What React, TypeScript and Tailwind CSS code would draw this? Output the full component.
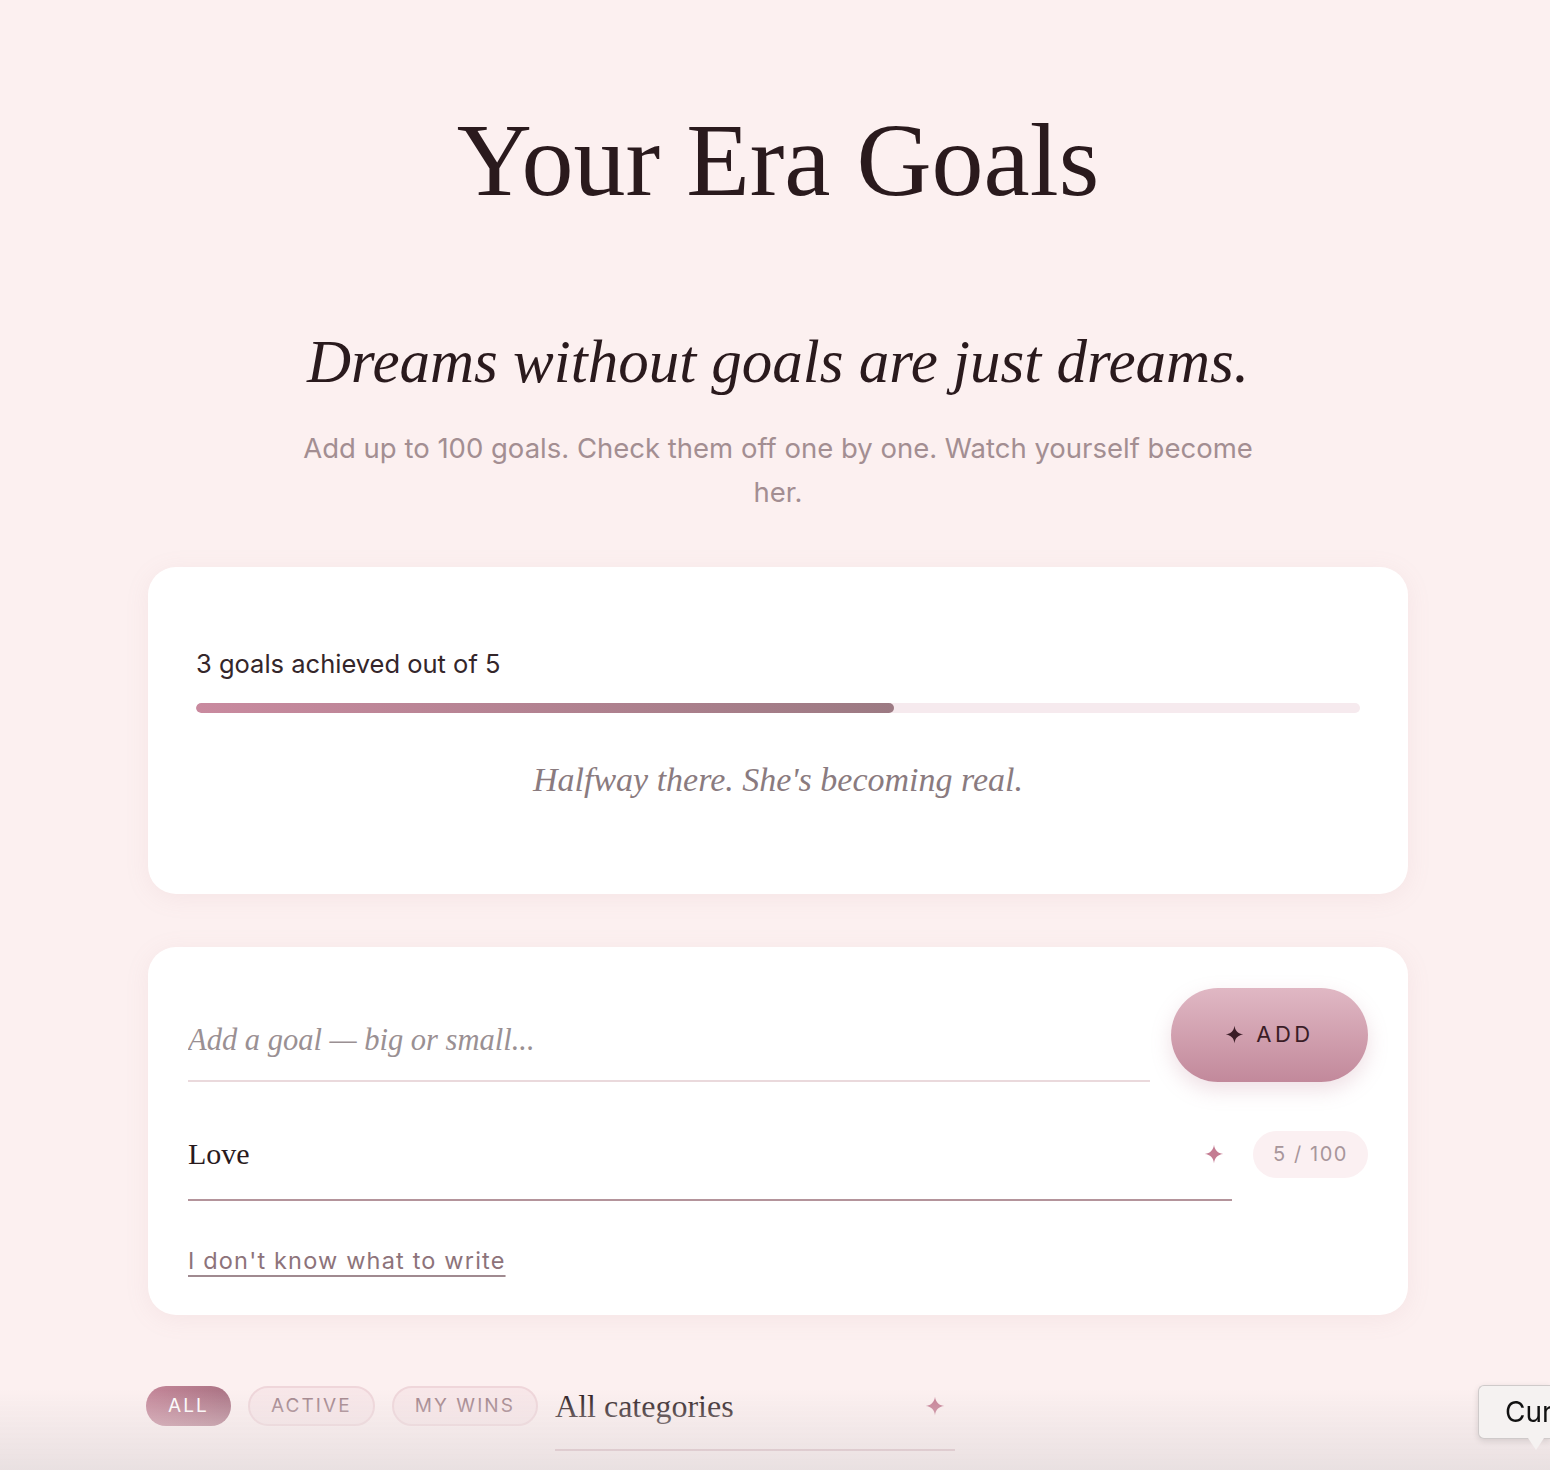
import React, { useState } from 'react';

const serif = "font-['Liberation_Serif',serif]";
const sans = "font-['Inter',sans-serif]";

const Sparkle: React.FC<{ className?: string }> = ({ className }) => (
  <svg viewBox="0 0 24 24" className={className} fill="currentColor">
    <path d="M12 1 C12.8 7.5 16.5 11.2 23 12 C16.5 12.8 12.8 16.5 12 23 C11.2 16.5 7.5 12.8 1 12 C7.5 11.2 11.2 7.5 12 1 Z" />
  </svg>
);

const App: React.FC = () => {
  const [filter, setFilter] = useState<'all' | 'active' | 'wins'>('all');
  const achieved = 3;
  const total = 5;
  const pct = (achieved / total) * 100;

  const pill = (key: 'all' | 'active' | 'wins', label: string) => (
    <button
      onClick={() => setFilter(key)}
      className={
        filter === key
          ? `${sans} h-[40px] px-[22px] rounded-full text-[19px] tracking-[0.11em] text-white bg-gradient-to-r from-[#c48799] to-[#ab7485]`
          : `${sans} h-[40px] px-[21px] rounded-full text-[19px] tracking-[0.11em] text-[#a08289] bg-[#f8e7e9] border-2 border-[#efd6da]`
      }
    >
      {label}
    </button>
  );

  return (
    <div className="min-h-screen bg-[#fcf0f0] pb-[40px]">
      <div className="w-[1260px] ml-[148px]">
        <h1 className={`${serif} text-center text-[104px] leading-none text-[#2a1a1d] pt-[108px]`}>
          Your Era Goals
        </h1>

        <p className={`${serif} italic text-center text-[61px] leading-none text-[#2a1a1d] mt-[119px]`}>
          Dreams without goals are just dreams.
        </p>
        <p className={`${sans} text-center text-[27.5px] leading-[44px] text-[#a38e92] max-w-[980px] mx-auto mt-[34px]`}>
          Add up to 100 goals. Check them off one by one. Watch yourself become her.
        </p>

        {/* progress card */}
        <div className="mt-[53px] bg-white rounded-[28px] shadow-[0_4px_24px_rgba(190,140,150,0.10)] px-12 pt-[84px] pb-[97px]">
          <div className={`${sans} text-[25.5px] leading-none text-[#34262a]`}>
            {achieved} goals achieved out of {total}
          </div>
          <div className="mt-[26px] h-[10px] rounded-full bg-[#f6eaee] overflow-hidden">
            <div
              className="h-full rounded-full bg-gradient-to-r from-[#c98a9f] to-[#9c7a83]"
              style={{ width: `${pct}%` }}
            />
          </div>
          <p className={`${serif} italic text-center text-[34px] leading-none text-[#8a7b7f] mt-[50px]`}>
            Halfway there. She's becoming real.
          </p>
        </div>

        {/* add goal card */}
        <div className="mt-[53px] bg-white rounded-[28px] shadow-[0_4px_24px_rgba(190,140,150,0.10)] px-10 pt-[41px] pb-[43px]">
          <div className="flex items-end gap-[21px]">
            <div className="flex-1 border-b-2 border-[#ead9dc] pb-[22px]">
              <input
                placeholder="Add a goal — big or small..."
                className={`${serif} italic w-full text-[30.5px] leading-none text-[#2a1a1d] placeholder:text-[#9a9093] outline-none bg-transparent`}
              />
            </div>
            <button
              className={`${sans} w-[197px] h-[94px] rounded-full bg-gradient-to-b from-[#e0b8c4] to-[#c2899b] shadow-[0_8px_20px_rgba(190,130,150,0.25)] flex items-center justify-center gap-[12px] text-[22px] tracking-[0.16em] text-[#3a1c26]`}
            >
              <Sparkle className="w-[19px] h-[19px]" />
              ADD
            </button>
          </div>

          <div className="flex items-start gap-[21px] mt-[40px]">
            <div className="flex-1 flex items-center border-b-2 border-[#b4949b] pt-[17px] pb-[30px]">
              <span className={`${serif} flex-1 text-[30px] leading-none text-[#2a1a1d]`}>Love</span>
              <Sparkle className="w-[20px] h-[20px] text-[#c47c92] mr-[8px]" />
            </div>
            <div className={`${sans} mt-[9px] w-[115px] h-[47px] rounded-full bg-[#fbf0f2] flex items-center justify-center text-[20px] tracking-[0.08em] text-[#a8969b]`}>
              5 / 100
            </div>
          </div>

          <button
            className={`${sans} block mt-[48px] text-[23.5px] leading-none tracking-[0.05em] text-[#8d737a] underline underline-offset-[6px] decoration-[1.5px] decoration-[#a08a90]`}
          >
            I don't know what to write
          </button>
        </div>

        {/* filters */}
        <div className="mt-[71px] flex items-start gap-[17px] -ml-[2px]">
          {pill('all', 'ALL')}
          {pill('active', 'ACTIVE')}
          {pill('wins', 'MY WINS')}
          <div className="w-[400px] flex items-center border-b-2 border-[#c0929e] pt-[4px] pb-[27px]">
            <span className={`${serif} flex-1 text-[32px] leading-none text-[#2a1a1d]`}>All categories</span>
            <Sparkle className="w-[20px] h-[20px] text-[#c47c92] mr-[10px]" />
          </div>
        </div>
      </div>

      {/* bottom fade */}
      <div className="fixed left-0 right-0 bottom-0 h-[80px] pointer-events-none bg-gradient-to-b from-[rgba(233,224,225,0)] to-[#e9e0e1]" />

      {/* tooltip peeking in from the right edge */}
      <div className="fixed right-0 top-[1385px] pointer-events-none">
        <div className={`${sans} relative w-[72px] h-[54px] pl-[26px] flex items-center bg-[#f5f2f1] border border-[#cfcaca] border-r-0 rounded-l-[6px] shadow-[0_2px_6px_rgba(0,0,0,0.12)] text-[28px] text-[#111] overflow-hidden whitespace-nowrap`}>
          Cur
        </div>
        <div className="absolute left-[50px] top-[53px] w-0 h-0 border-l-[8px] border-l-transparent border-r-[8px] border-r-transparent border-t-[12px] border-t-[#f5f2f1]" />
      </div>
    </div>
  );
};

export default App;
